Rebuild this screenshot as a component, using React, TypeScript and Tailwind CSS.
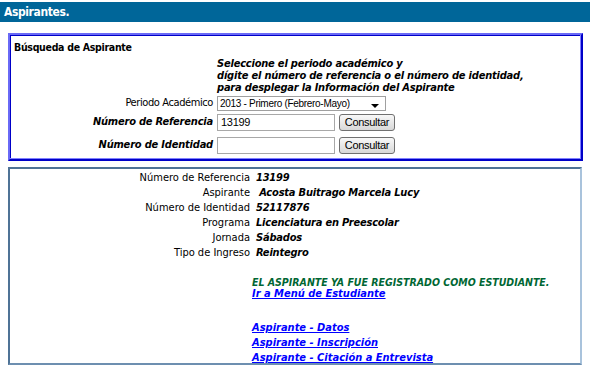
const font = "font-['DejaVu_Sans_Condensed','DejaVu_Sans',sans-serif]";
const arial = "font-['Liberation_Sans',sans-serif]";

const datos = [
  { label: "Número de Referencia", value: "13199" },
  { label: "Aspirante", value: "\u00a0Acosta Buitrago Marcela Lucy" },
  { label: "Número de Identidad", value: "52117876" },
  { label: "Programa", value: "Licenciatura en Preescolar" },
  { label: "Jornada", value: "Sábados" },
  { label: "Tipo de Ingreso", value: "Reintegro" },
];

const Boton = () => (
  <button
    className={`h-[17px] w-[56px] rounded-[3px] border border-[#707070] bg-gradient-to-b from-[#f8f8f8] to-[#d8d8d8] text-[11px] leading-[15px] tracking-[-0.3px] text-black ${arial}`}
  >
    Consultar
  </button>
);

export default function App() {
  return (
    <div className={`h-[371px] w-[590px] overflow-hidden bg-white pt-[2px] text-black ${font}`}>
      {/* barra de titulo */}
      <div className="h-5 bg-[#006699] pl-1 text-[12px] font-bold leading-5 tracking-[-0.4px] text-white">
        Aspirantes.
      </div>

      {/* busqueda */}
      <div className="ml-2 mt-[11px] h-[128px] w-[575px] border-2 border-t-[#6a6af6] border-l-[#6a6af6] border-r-[#0000c8] border-b-[#0000c8] shadow-[inset_-1px_-1px_0_#8080ff,inset_1px_1px_0_#0000c8]">
        <div className="pl-1 pt-[5px] text-[10.5px] font-bold leading-[14px] tracking-[-0.3px]">Búsqueda de Aspirante</div>
        <div className="ml-[207px] mt-[4px] text-[11px] font-bold italic leading-[12px] tracking-[-0.2px]">
          <div>Seleccione el periodo académico y</div>
          <div>dígite el número de referencia o el número de identidad,</div>
          <div>para desplegar la Información del Aspirante</div>
        </div>

        <div className="mt-[2px] flex h-[15px] items-center gap-1">
          <div className="w-[203px] text-right text-[11px] tracking-[-0.4px]">Periodo Académico</div>
          <div className={`flex h-[15px] w-[169px] items-center justify-between overflow-hidden whitespace-nowrap border border-[#a0a0a0] bg-white pl-[2px] text-[10px] leading-[13px] tracking-[-0.3px] ${arial}`}>
            <span>2013 - Primero (Febrero-Mayo)</span>
            <svg width="9" height="6" viewBox="0 0 9 6" className="mr-[5px] mt-[6px] shrink-0">
              <path d="M0 0h8l-4 4z" fill="#000" />
            </svg>
          </div>
        </div>

        <div className="mt-[3px] flex h-[17px] items-center gap-1">
          <div className="w-[203px] text-right text-[11px] font-bold italic tracking-[-0.2px]">Número de Referencia</div>
          <div className="flex items-center gap-[4px]">
            <div className={`h-[17px] w-[118px] border border-[#a8a8a8] pl-[3px] text-[11px] leading-[15px] tracking-[-0.3px] ${arial}`}>13199</div>
            <Boton />
          </div>
        </div>

        <div className="mt-[6px] flex h-[17px] items-center gap-1">
          <div className="w-[203px] text-right text-[11px] font-bold italic tracking-[-0.2px]">Número de Identidad</div>
          <div className="flex items-center gap-[4px]">
            <div className="h-[17px] w-[118px] border border-[#a8a8a8]" />
            <Boton />
          </div>
        </div>
      </div>

      {/* datos del aspirante */}
      <div className="ml-2 mt-[6px] h-[198px] w-[574px] border-2 border-t-[#4f7396] border-l-[#4f7396] border-r-[#a9c3dc] border-b-[#6d8fb0]">
        <div className="mt-[1px] grid grid-cols-[240px_auto] gap-x-[6px] text-[11px] leading-[15px]">
          {datos.map((d) => (
            <div key={d.label} className="contents">
              <div className="text-right">{d.label}</div>
              <div className="font-bold italic tracking-[-0.2px]">{d.value}</div>
            </div>
          ))}
        </div>
        <div className="ml-[242px] mt-[16px] text-[11px] font-bold italic leading-[12px]">
          <div className="text-[10.5px] text-[#006633]">EL ASPIRANTE YA FUE REGISTRADO COMO ESTUDIANTE.</div>
          <a href="#" className="text-[#0000ff] underline">Ir a Menú de Estudiante</a>
        </div>
        <div className="ml-[242px] mt-[20px] flex flex-col text-[11px] font-bold italic leading-[15px] text-[#0000ff]">
          <a href="#" className="underline">Aspirante - Datos</a>
          <a href="#" className="underline">Aspirante - Inscripción</a>
          <a href="#" className="underline">Aspirante - Citación a Entrevista</a>
        </div>
      </div>
    </div>
  );
}
